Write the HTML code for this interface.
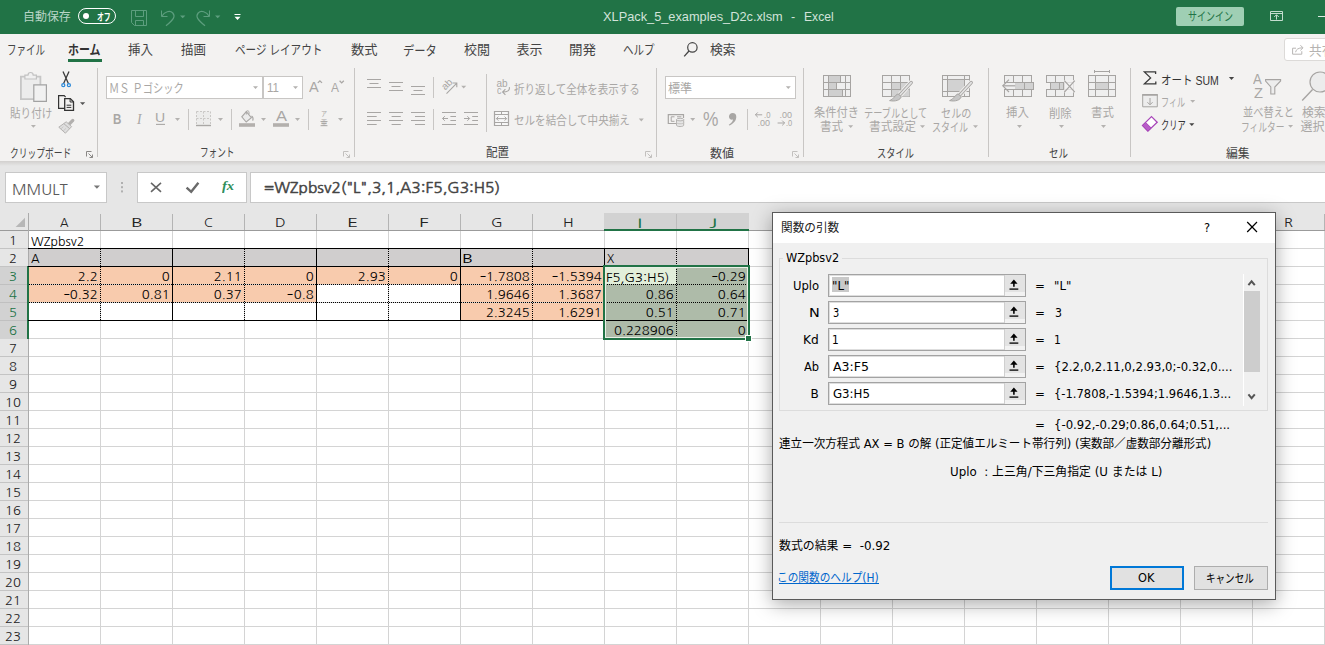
<!DOCTYPE html>
<html lang="ja">
<head>
<meta charset="utf-8">
<title>XLPack_5_examples_D2c.xlsm - Excel</title>
<style>
html,body{margin:0;padding:0;}
body{width:1325px;height:645px;overflow:hidden;position:relative;background:#fff;font-family:"Liberation Sans","Noto Sans CJK JP",sans-serif;}
.abs{position:absolute;}
.t{position:absolute;white-space:pre;line-height:0;transform-origin:0 0;margin-top:-40px;}
.t i{display:inline-block;width:0;height:40px;vertical-align:baseline;}
#titlebar{left:0;top:0;width:1325px;height:34px;background:#217346;}
#ribbon{left:0;top:34px;width:1325px;height:127px;background:#f3f2f1;}
#fbar{left:0;top:161px;width:1325px;height:52px;background:#e6e6e6;}
#fshadow{left:0;top:161px;width:1325px;height:5px;background:linear-gradient(#d2d0ce,#e6e6e6);}
.box{position:absolute;background:#fff;border:1px solid #c8c6c4;box-sizing:border-box;}
.sep{position:absolute;width:1px;background:#c8c6c4;}
#icons{position:absolute;left:0;top:0;}
</style>
</head>
<body>
<div id="titlebar" class="abs"></div>
<div id="ribbon" class="abs"></div>
<div id="fbar" class="abs"></div>
<div id="fshadow" class="abs"></div>
<style>
.c{position:absolute;width:72px;height:18px;font:12.5px/20px "NanumGothic","Liberation Sans",sans-serif;color:#000;white-space:nowrap;box-sizing:border-box;overflow:visible;}
.c.r{text-align:right;padding-right:3.2px;transform:scaleX(1.05);transform-origin:100% 50%;}
.c u{text-decoration:none;display:inline-block;transform:scaleX(1.45);transform-origin:100% 50%;margin-left:2px;}
</style>
<div class="abs" style="left:29px;top:231px;width:1296px;height:414px;background-color:#fff;background-image:linear-gradient(90deg,transparent 71px,#d4d4d4 71px),linear-gradient(0deg,#d4d4d4 1px,transparent 1px);background-size:72px 18px,72px 18px;background-position:0 0,0 0;"></div>
<div class="abs" style="left:0px;top:213px;width:1325px;height:18px;background:#e6e6e6;"></div>
<div class="abs" style="left:0px;top:231px;width:29px;height:414px;background:#e6e6e6;"></div>
<div class="abs" style="left:0px;top:230px;width:1325px;height:1px;background:#9b9b9b;"></div>
<div class="abs" style="left:28px;top:213px;width:1px;height:432px;background:#ababab;"></div>
<div class="abs" style="left:100px;top:214px;width:1px;height:16px;background:#b4b4b4;"></div>
<div class="abs" style="left:172px;top:214px;width:1px;height:16px;background:#b4b4b4;"></div>
<div class="abs" style="left:244px;top:214px;width:1px;height:16px;background:#b4b4b4;"></div>
<div class="abs" style="left:316px;top:214px;width:1px;height:16px;background:#b4b4b4;"></div>
<div class="abs" style="left:388px;top:214px;width:1px;height:16px;background:#b4b4b4;"></div>
<div class="abs" style="left:460px;top:214px;width:1px;height:16px;background:#b4b4b4;"></div>
<div class="abs" style="left:532px;top:214px;width:1px;height:16px;background:#b4b4b4;"></div>
<div class="abs" style="left:604px;top:214px;width:1px;height:16px;background:#b4b4b4;"></div>
<div class="abs" style="left:676px;top:214px;width:1px;height:16px;background:#b4b4b4;"></div>
<div class="abs" style="left:748px;top:214px;width:1px;height:16px;background:#b4b4b4;"></div>
<div class="abs" style="left:820px;top:214px;width:1px;height:16px;background:#b4b4b4;"></div>
<div class="abs" style="left:892px;top:214px;width:1px;height:16px;background:#b4b4b4;"></div>
<div class="abs" style="left:964px;top:214px;width:1px;height:16px;background:#b4b4b4;"></div>
<div class="abs" style="left:1036px;top:214px;width:1px;height:16px;background:#b4b4b4;"></div>
<div class="abs" style="left:1108px;top:214px;width:1px;height:16px;background:#b4b4b4;"></div>
<div class="abs" style="left:1180px;top:214px;width:1px;height:16px;background:#b4b4b4;"></div>
<div class="abs" style="left:1252px;top:214px;width:1px;height:16px;background:#b4b4b4;"></div>
<div class="abs" style="left:1324px;top:214px;width:1px;height:16px;background:#b4b4b4;"></div>
<div class="abs" style="left:0px;top:248px;width:28px;height:1px;background:#c4c4c4;"></div>
<div class="abs" style="left:0px;top:266px;width:28px;height:1px;background:#c4c4c4;"></div>
<div class="abs" style="left:0px;top:284px;width:28px;height:1px;background:#c4c4c4;"></div>
<div class="abs" style="left:0px;top:302px;width:28px;height:1px;background:#c4c4c4;"></div>
<div class="abs" style="left:0px;top:320px;width:28px;height:1px;background:#c4c4c4;"></div>
<div class="abs" style="left:0px;top:338px;width:28px;height:1px;background:#c4c4c4;"></div>
<div class="abs" style="left:0px;top:356px;width:28px;height:1px;background:#c4c4c4;"></div>
<div class="abs" style="left:0px;top:374px;width:28px;height:1px;background:#c4c4c4;"></div>
<div class="abs" style="left:0px;top:392px;width:28px;height:1px;background:#c4c4c4;"></div>
<div class="abs" style="left:0px;top:410px;width:28px;height:1px;background:#c4c4c4;"></div>
<div class="abs" style="left:0px;top:428px;width:28px;height:1px;background:#c4c4c4;"></div>
<div class="abs" style="left:0px;top:446px;width:28px;height:1px;background:#c4c4c4;"></div>
<div class="abs" style="left:0px;top:464px;width:28px;height:1px;background:#c4c4c4;"></div>
<div class="abs" style="left:0px;top:482px;width:28px;height:1px;background:#c4c4c4;"></div>
<div class="abs" style="left:0px;top:500px;width:28px;height:1px;background:#c4c4c4;"></div>
<div class="abs" style="left:0px;top:518px;width:28px;height:1px;background:#c4c4c4;"></div>
<div class="abs" style="left:0px;top:536px;width:28px;height:1px;background:#c4c4c4;"></div>
<div class="abs" style="left:0px;top:554px;width:28px;height:1px;background:#c4c4c4;"></div>
<div class="abs" style="left:0px;top:572px;width:28px;height:1px;background:#c4c4c4;"></div>
<div class="abs" style="left:0px;top:590px;width:28px;height:1px;background:#c4c4c4;"></div>
<div class="abs" style="left:0px;top:608px;width:28px;height:1px;background:#c4c4c4;"></div>
<div class="abs" style="left:0px;top:626px;width:28px;height:1px;background:#c4c4c4;"></div>
<div class="abs" style="left:0px;top:644px;width:28px;height:1px;background:#c4c4c4;"></div>
<svg class="abs" style="left:0;top:213px" width="29" height="18"><path d="M25 4.8 L25 14 L15.6 14 Z" fill="#b7b7b7"/></svg>
<div class="abs" style="left:604px;top:213px;width:145px;height:17px;background:#d2d2d2;"></div>
<div class="abs" style="left:676px;top:214px;width:1px;height:15px;background:#bcbcbc;"></div>
<div class="abs" style="left:604px;top:229px;width:145px;height:2px;background:#217346;"></div>
<div class="abs" style="left:0px;top:267px;width:28px;height:72px;background:#d2d2d2;"></div>
<div class="abs" style="left:0px;top:284px;width:28px;height:1px;background:#c0c0c0;"></div>
<div class="abs" style="left:0px;top:302px;width:28px;height:1px;background:#c0c0c0;"></div>
<div class="abs" style="left:0px;top:320px;width:28px;height:1px;background:#c0c0c0;"></div>
<div class="abs" style="left:27px;top:266px;width:2px;height:73px;background:#217346;"></div>
<div class="abs" style="left:29px;top:249px;width:720px;height:17px;background:#d0cece;"></div>
<div class="abs" style="left:29px;top:267px;width:576px;height:17px;background:#f8cbad;"></div>
<div class="abs" style="left:29px;top:285px;width:288px;height:17px;background:#f8cbad;"></div>
<div class="abs" style="left:461px;top:285px;width:144px;height:17px;background:#f8cbad;"></div>
<div class="abs" style="left:461px;top:303px;width:144px;height:17px;background:#f8cbad;"></div>
<div class="abs" style="left:605px;top:267px;width:143px;height:71px;background:#aebba9;"></div>
<div class="abs" style="left:605px;top:267px;width:71px;height:17px;background:#e2efda;"></div>
<div class="abs" style="left:28px;top:248px;width:721px;height:1px;background:#000;"></div>
<div class="abs" style="left:28px;top:266px;width:721px;height:1px;background:#000;"></div>
<div class="abs" style="left:28px;top:320px;width:721px;height:1px;background:#000;"></div>
<div class="abs" style="left:172px;top:248px;width:1px;height:73px;background:#000;"></div>
<div class="abs" style="left:316px;top:248px;width:1px;height:73px;background:#000;"></div>
<div class="abs" style="left:460px;top:248px;width:1px;height:73px;background:#000;"></div>
<div class="abs" style="left:604px;top:248px;width:1px;height:73px;background:#000;"></div>
<div class="abs" style="left:748px;top:248px;width:1px;height:73px;background:#000;"></div>
<div class="abs" style="left:29px;top:284px;width:719px;height:1px;background:transparent;background-image:repeating-linear-gradient(90deg,#000 0,#000 1px,transparent 1px,transparent 2px);"></div>
<div class="abs" style="left:29px;top:302px;width:719px;height:1px;background:transparent;background-image:repeating-linear-gradient(90deg,#000 0,#000 1px,transparent 1px,transparent 2px);"></div>
<div class="abs" style="left:100px;top:249px;width:1px;height:71px;background:transparent;background-image:repeating-linear-gradient(180deg,#000 0,#000 1px,transparent 1px,transparent 2px);"></div>
<div class="abs" style="left:244px;top:249px;width:1px;height:71px;background:transparent;background-image:repeating-linear-gradient(180deg,#000 0,#000 1px,transparent 1px,transparent 2px);"></div>
<div class="abs" style="left:388px;top:249px;width:1px;height:71px;background:transparent;background-image:repeating-linear-gradient(180deg,#000 0,#000 1px,transparent 1px,transparent 2px);"></div>
<div class="abs" style="left:532px;top:249px;width:1px;height:71px;background:transparent;background-image:repeating-linear-gradient(180deg,#000 0,#000 1px,transparent 1px,transparent 2px);"></div>
<div class="abs" style="left:676px;top:249px;width:1px;height:71px;background:transparent;background-image:repeating-linear-gradient(180deg,#000 0,#000 1px,transparent 1px,transparent 2px);"></div>
<div class="abs" style="left:676px;top:321px;width:1px;height:16px;background:transparent;background-image:repeating-linear-gradient(180deg,#000 0,#000 1px,transparent 1px,transparent 2px);"></div>
<div class="abs" style="left:603px;top:265px;width:147px;height:75px;border:2px solid #217346;box-sizing:border-box;"></div>
<div class="abs" style="left:605px;top:267px;width:143px;height:71px;border:1px solid #e9efe6;box-sizing:border-box;"></div>
<div class="abs" style="left:745px;top:335px;width:7px;height:7px;background:#fff;"></div>
<div class="abs" style="left:746px;top:336px;width:5px;height:5px;background:#217346;"></div>
<div class="c r" style="left:29px;top:267px;">2.2</div>
<div class="c r" style="left:101px;top:267px;">0</div>
<div class="c r" style="left:173px;top:267px;">2.11</div>
<div class="c r" style="left:245px;top:267px;">0</div>
<div class="c r" style="left:317px;top:267px;">2.93</div>
<div class="c r" style="left:389px;top:267px;">0</div>
<div class="c r" style="left:461px;top:267px;"><u>-</u>1.7808</div>
<div class="c r" style="left:533px;top:267px;"><u>-</u>1.5394</div>
<div class="c r" style="left:677px;top:267px;"><u>-</u>0.29</div>
<div class="c r" style="left:29px;top:285px;"><u>-</u>0.32</div>
<div class="c r" style="left:101px;top:285px;">0.81</div>
<div class="c r" style="left:173px;top:285px;">0.37</div>
<div class="c r" style="left:245px;top:285px;"><u>-</u>0.8</div>
<div class="c r" style="left:461px;top:285px;">1.9646</div>
<div class="c r" style="left:533px;top:285px;">1.3687</div>
<div class="c r" style="left:605px;top:285px;">0.86</div>
<div class="c r" style="left:677px;top:285px;">0.64</div>
<div class="c r" style="left:461px;top:303px;">2.3245</div>
<div class="c r" style="left:533px;top:303px;">1.6291</div>
<div class="c r" style="left:605px;top:303px;">0.51</div>
<div class="c r" style="left:677px;top:303px;">0.71</div>
<div class="c r" style="left:605px;top:321px;">0.228906</div>
<div class="c r" style="left:677px;top:321px;">0</div>
<!-- ribbon boxes / separators -->
<div class="box" style="left:106px;top:76px;width:157px;height:23px;"></div>
<div class="box" style="left:263px;top:76px;width:40px;height:23px;"></div>
<div class="box" style="left:665px;top:76px;width:131px;height:23px;"></div>
<div class="sep" style="left:97px;top:68px;height:89px;"></div>
<div class="sep" style="left:354px;top:68px;height:89px;"></div>
<div class="sep" style="left:656px;top:68px;height:89px;"></div>
<div class="sep" style="left:803px;top:68px;height:89px;"></div>
<div class="sep" style="left:988px;top:68px;height:89px;"></div>
<div class="sep" style="left:1130px;top:68px;height:89px;"></div>
<div class="sep" style="left:188px;top:109px;height:21px;"></div>
<div class="sep" style="left:231px;top:109px;height:21px;"></div>
<div class="sep" style="left:308px;top:109px;height:21px;"></div>
<div class="sep" style="left:433px;top:77px;height:21px;"></div>
<div class="sep" style="left:433px;top:109px;height:21px;"></div>
<div class="sep" style="left:486px;top:74px;height:58px;"></div>
<div class="sep" style="left:747px;top:109px;height:21px;"></div>
<!-- home tab underline -->
<div class="abs" style="left:68px;top:59px;width:34px;height:3px;background:#217346;"></div>
<!-- sign-in button -->
<div class="abs" style="left:1176px;top:7px;width:68px;height:19px;background:#9fcfb4;border-radius:2px;"></div>
<!-- share button -->
<div class="abs" style="left:1284px;top:38px;width:60px;height:23px;background:#fff;border:1px solid #dcdad8;border-radius:3px;box-sizing:border-box;"></div>
<!-- autosave toggle -->
<div class="abs" style="left:78px;top:8px;width:38px;height:16px;border:1px solid #fff;border-radius:8px;box-sizing:border-box;"></div>
<div class="abs" style="left:82.7px;top:12.7px;width:6.6px;height:6.6px;background:#fff;border-radius:4px;"></div>
<!-- formula bar boxes -->
<div class="box" style="left:5px;top:172px;width:102px;height:31px;border-color:#c8c8c8;"></div>
<div class="box" style="left:137px;top:172px;width:110px;height:31px;border-color:#c8c8c8;"></div>
<div class="box" style="left:250px;top:172px;width:1080px;height:31px;border-color:#c8c8c8;"></div>

<style>
#dlg{position:absolute;left:772px;top:212px;width:504px;height:388px;box-sizing:border-box;border:1px solid #5a5a5a;background:#f0f0f0;box-shadow:0 4px 18px 0 rgba(0,0,0,.34);}
#dlgtitle{position:absolute;left:0;top:0;width:502px;height:30px;background:#fff;}
.grp{position:absolute;border:1px solid #dcdcdc;box-sizing:border-box;}
.inp{position:absolute;left:828px;width:198px;height:23px;box-sizing:border-box;border:1px solid #a3a3a3;background:#fff;box-shadow:inset 0 0 0 1px #dedede;}
.rbtn{position:absolute;left:1004px;width:21px;height:21px;background:linear-gradient(#e3e3e3 0,#e3e3e3 80%,#f2f2f2 80%);border-left:1px solid #cfcfcf;box-sizing:border-box;}
.dbtn{position:absolute;top:566px;height:24px;box-sizing:border-box;background:#e1e1e1;}
</style>
<div id="dlg"><div id="dlgtitle"></div></div>
<div class="grp" style="left:779px;top:258px;width:489px;height:153px;"></div>
<div class="abs" style="left:783px;top:252px;width:59px;height:12px;background:#f0f0f0;"></div>
<div class="inp" style="top:274px"></div>
<div class="rbtn" style="top:275px"></div>
<div class="inp" style="top:301px"></div>
<div class="rbtn" style="top:302px"></div>
<div class="inp" style="top:328px"></div>
<div class="rbtn" style="top:329px"></div>
<div class="inp" style="top:355px"></div>
<div class="rbtn" style="top:356px"></div>
<div class="inp" style="top:382px"></div>
<div class="rbtn" style="top:383px"></div>
<div class="abs" style="left:832px;top:277px;width:17px;height:15px;background:#c9c9c9;"></div>
<div class="abs" style="left:1243px;top:274px;width:1px;height:132px;background:#fff;"></div>
<div class="abs" style="left:1244px;top:274px;width:16px;height:132px;background:#f0f0f0;"></div>
<div class="abs" style="left:1244px;top:291px;width:16px;height:81px;background:#cdcdcd;"></div>
<div class="abs" style="left:779px;top:522px;width:489px;height:1px;background:#dcdcdc;"></div>
<div class="dbtn" style="left:1110px;width:74px;border:2px solid #0078d7;"></div>
<div class="dbtn" style="left:1194px;width:74px;border:1px solid #adadad;"></div>
<div class="abs" style="left:779px;top:583px;width:100px;height:1px;background:#0066cc;"></div>
<svg id="icons" width="1325" height="645" viewBox="0 0 1325 645">
<g id="title-icons" fill="none" stroke="#5d9e7e" stroke-width="1">
  <!-- save -->
  <path d="M131.5 10.5 H146.5 V25.5 H134.5 L131.5 22.5 Z"/>
  <path d="M135.5 10.5 V16.5 H143.5 V10.5"/>
  <path d="M135.5 25.5 V20.5 H143.5 V25.5"/>
  <!-- undo -->
  <path d="M161.5 10.5 V16.5 H167.5" />
  <path d="M161.8 16.2 C164.5 11.5 170 10 172.8 13 C175.8 16.5 173.5 19.5 166 25.8" stroke-width="1.2"/>
  <path d="M180 15.5 h5.4 l-2.7 2.8 z" fill="#5d9e7e" stroke="none"/>
  <!-- redo -->
  <path d="M209.5 10.5 V16.5 H203.5" />
  <path d="M209.2 16.2 C206.5 11.5 201 10 198.2 13 C195.2 16.5 197.5 19.5 205 25.8" stroke-width="1.2"/>
  <path d="M215 15.5 h5.4 l-2.7 2.8 z" fill="#5d9e7e" stroke="none"/>
  <!-- customize QAT -->
  <path d="M234.5 14 h6 v1 h-6 z M234.5 16.8 h6 l-3 3.3 z" fill="#fff" stroke="none"/>
  <!-- ribbon display options -->
  <path d="M1270.5 11.5 H1282.5 V20.5 H1270.5 Z M1270.5 13.5 H1282.5" stroke="#c4ddcf"/>
  <path d="M1276.5 19.6 V15 M1274.2 17 L1276.5 14.7 L1278.8 17" stroke="#c4ddcf"/>
  <!-- minimise -->
  <path d="M1318 16.5 H1326" stroke="#dcebe2"/>
</g>

<g id="clip-icons" fill="none" stroke-width="1">
  <!-- paste -->
  <path d="M20.9 76.7 H40.4 V99.1 H20.9 Z" fill="#ececec" stroke="#c6c6c6" stroke-width="1.8"/>
  <path d="M24.9 79 V75.2 H28 C28 71.6 33.2 71.6 33.2 75.2 H36.4 V79 Z" fill="#f0f0f0" stroke="#c2c2c2" stroke-width="1.2"/>
  <path d="M33.8 84.8 H46.4 V101.3 H33.8 Z" fill="#f1f1f1" stroke="#a2a2a2" stroke-width="1.2"/>
  <path d="M30.9 125 h5 l-2.5 2.8 z" fill="#b4b2b0" stroke="none"/>
  <!-- scissors -->
  <path d="M63 71.4 L68.4 83.4 M69 71.4 L63.6 83.4" stroke="#3b3b3b" stroke-width="1.3"/>
  <circle cx="63.3" cy="85.2" r="1.5" stroke="#2b88d8" stroke-width="1.3"/>
  <circle cx="68.9" cy="85.2" r="1.5" stroke="#2b88d8" stroke-width="1.3"/>
  <!-- copy -->
  <path d="M64.6 108.4 H58.6 V95.7 H64.2 L65.6 97.1" stroke="#333" stroke-width="1.2"/>
  <path d="M64.7 98.6 H70.3 L73.5 101.8 V110.4 H64.7 Z" stroke="#333" stroke-width="1.3" fill="#f3f2f1"/>
  <path d="M70.1 98.8 V102 H73.3" stroke="#333" stroke-width="1"/>
  <path d="M66.6 105.2 H71.3 M66.6 107.4 H71.3" stroke="#333" stroke-width="1"/>
  <path d="M80 102.2 h5.2 l-2.6 2.9 z" fill="#555" stroke="none"/>
  <!-- format painter -->
  <path d="M69.4 123.8 L72.8 120.4" stroke="#b2b0ae" stroke-width="3.2" stroke-linecap="round"/>
  <path d="M58.8 127.2 L65.4 133.2 L71.6 126.6 L66.2 121.8 Z" fill="#dedede" stroke="#b4b2b0" stroke-width="1"/>
  <path d="M64 123.8 L69.8 128.8" stroke="#b4b2b0" stroke-width="1"/>
  <path d="M61 128.8 L63.4 126.6 M63.2 131 L66 128.4" stroke="#c4c2c0" stroke-width="0.8"/>
  <!-- launcher clipboard -->
  <path d="M86.5 156.5 V151.5 H91.5 M88.5 153.5 L92.5 157.5 M92.5 154.5 V157.5 H89.5" stroke="#8a8886" stroke-width="1"/>
</g>

<g id="font-icons" fill="none" stroke-width="1">
  <!-- dropdown arrows in combo boxes -->
  <path d="M253 86.3 h5 l-2.5 2.8 z M293 86.3 h5 l-2.5 2.8 z" fill="#b4b2b0"/>
  <!-- grow/shrink carets -->
  <path d="M317.8 82.9 L319.9 80.8 L322 82.9" stroke="#a9a7a5" stroke-width="1.3"/>
  <path d="M339.6 80.8 L341.7 82.9 L343.8 80.8" stroke="#a9a7a5" stroke-width="1.3"/>
  <!-- U underline -->
  <path d="M156 124.4 H165" stroke="#a9a7a5" stroke-width="1.1"/>
  <path d="M175 118.1 h5 l-2.5 2.8 z" fill="#b4b2b0"/>
  <!-- borders -->
  <rect x="196.5" y="111.5" width="14" height="13" fill="#ececeb" stroke="none"/>
  <path d="M196.5 111.5 H210.5 M196.5 111.5 V124.5 M210.5 111.5 V124.5 M203.5 111.5 V124.5 M196.5 118.5 H210.5" stroke="#c9c7c5" stroke-dasharray="2 1.5"/>
  <path d="M196 125.5 H211" stroke="#a9a7a5" stroke-width="1.4"/>
  <path d="M218 118.1 h5 l-2.5 2.8 z" fill="#b4b2b0"/>
  <!-- fill color -->
  <path d="M246.3 111.6 L251.4 117.6 L246.2 122 L241.8 116.8 Z" fill="#ebebeb" stroke="#a9a7a5" stroke-width="1.1"/>
  <path d="M246.3 114.5 V111.8 C246.3 110.4 249 110.4 249 112.2 V114.2" stroke="#a9a7a5"/>
  <path d="M251.5 116 C253.2 117 253.4 119.4 252.6 120.6" stroke="#a9a7a5" stroke-width="1.2"/>
  <rect x="239" y="123.2" width="16" height="3.6" fill="#b3b0ad"/>
  <path d="M261 118.1 h5 l-2.5 2.8 z" fill="#b4b2b0"/>
  <!-- font color bar -->
  <rect x="273" y="123.2" width="16" height="3.6" fill="#b3b0ad"/>
  <path d="M295 118.1 h5 l-2.5 2.8 z" fill="#b4b2b0"/>
  <!-- phonetic -->
  <path d="M320.5 121.5 H327.5 M321.5 123.5 H326.5 M320.5 125.7 H327.5" stroke="#b0aeac"/>
  <path d="M338 118.1 h5 l-2.5 2.8 z" fill="#b4b2b0"/>
  <!-- launcher font -->
  <path d="M343.5 156.5 V151.5 H348.5 M345.5 153.5 L349.5 157.5 M349.5 154.5 V157.5 H346.5" stroke="#c2c0be" stroke-width="1"/>
</g>

<g id="align-icons" fill="none" stroke="#a8a6a4" stroke-width="1">
  <!-- vertical aligns (top row) -->
  <path d="M367 79.5 H381 M369.5 83.5 H378.5 M367 87.5 H381"/>
  <path d="M389 82.5 H403 M391.5 86.5 H400.5 M389 90.5 H403"/>
  <path d="M411 86.5 H425 M413.5 90.5 H422.5 M411 94.5 H425"/>
  <!-- orientation -->
  <text transform="translate(445.2,90.6) rotate(-45)" font-family="Liberation Sans, sans-serif" font-size="10" fill="#a8a6a4" stroke="none">ab</text>
  <path d="M446.5 93.6 L456.6 83.3 M452.6 83 H456.8 V87.2" stroke-width="1.1"/>
  <path d="M461.2 85.8 h5 l-2.5 2.8 z" fill="#b4b2b0" stroke="none"/>
  <!-- wrap arrow -->
  <path d="M509.3 87.2 C510 90.6 507.4 92 502.8 92 M505.4 89.2 L502.6 92 L505.4 94.8" stroke-width="1.1"/>
  <!-- horizontal aligns (bottom row) -->
  <path d="M367 112.5 H381 M367 116.5 H376.7 M367 120.5 H381 M367 124.5 H376.7"/>
  <path d="M389 112.5 H403 M391.6 116.5 H400.8 M389 120.5 H403 M391.6 124.5 H400.8"/>
  <path d="M411 112.5 H425 M415 116.5 H425 M411 120.5 H425 M415 124.5 H425"/>
  <!-- outdent -->
  <path d="M442 112.5 H456 M450.4 116.5 H456 M450.4 120.5 H456 M442 124.5 H456"/>
  <path d="M442.6 118.5 H448 M444.8 116.2 L442.5 118.5 L444.8 120.8"/>
  <!-- indent -->
  <path d="M464 112.5 H478 M472.2 116.5 H478 M472.2 120.5 H478 M464 124.5 H478"/>
  <path d="M464 118.5 H469.5 M467.3 116.2 L469.6 118.5 L467.3 120.8"/>
  <!-- merge & center -->
  <path d="M494.5 111.5 H508.5 V125.5 H494.5 Z" stroke-width="1.2" fill="#f7f7f7"/><path d="M494.5 114.5 H508.5 M494.5 122.5 H508.5 M501.5 111.5 V114.5 M501.5 122.5 V125.5"/>
  <path d="M496.4 118.6 H506.6 M498.4 116.6 L496.4 118.6 L498.4 120.6 M504.6 116.6 L506.6 118.6 L504.6 120.6"/>
  <path d="M638.8 118.6 h5 l-2.5 2.8 z" fill="#b4b2b0" stroke="none"/>
  <!-- launcher -->
  <path d="M645.5 156.5 V151.5 H650.5 M647.5 153.5 L651.5 157.5 M651.5 154.5 V157.5 H648.5" stroke="#c2c0be"/>
</g>

<g id="num-icons" fill="none" stroke="#a8a6a4" stroke-width="1">
  <path d="M785.8 86.2 h5 l-2.5 2.8 z" fill="#b4b2b0" stroke="none"/>
  <!-- accounting -->
  <path d="M676 123.5 H668.3 V114.6 H683.5 V118" stroke-width="1.2"/>
  <path d="M674.5 116.8 H671.2 V121.3 H674.5 M677 116.8 H681.4" stroke-width="1"/>
  <path d="M676.5 119.6 V125.2 C676.5 127 683.7 127 683.7 125.2 V119.6" fill="#e6e6e6" stroke="#b4b2b0"/>
  <ellipse cx="680.1" cy="119.6" rx="3.6" ry="1.3" fill="#ececec" stroke="#b4b2b0"/>
  <path d="M676.5 122.5 C676.5 124.2 683.7 124.2 683.7 122.5" stroke="#c4c2c0"/>
  <path d="M690.2 118.1 h5 l-2.5 2.8 z" fill="#b4b2b0" stroke="none"/>
  <!-- comma -->
  <path d="M732.6 113 C735 113 736.4 114.6 736.3 117 C736.2 120.6 733.4 124 729.2 125.6 L728.8 124.8 C731.4 123.4 732.8 121.6 733 119.6 C730.6 120.2 728.9 118.6 729 116.6 C729.1 114.4 730.6 113 732.6 113 Z" fill="#a8a6a4" stroke="none"/>
  <!-- inc decimal arrow -->
  <path d="M755.4 114.8 H762.2 M757.8 112.4 L755.4 114.8 L757.8 117.2"/>
  <!-- dec decimal arrow -->
  <path d="M777.6 123 H784.6 M782.2 120.6 L784.6 123 L782.2 125.4"/>
  <!-- launcher -->
  <path d="M792.5 156.5 V151.5 H797.5 M794.5 153.5 L798.5 157.5 M798.5 154.5 V157.5 H795.5" stroke="#c2c0be"/>
</g>

<g id="style-icons" fill="none" stroke="#a6a4a2" stroke-width="1">
  <!-- conditional formatting -->
  <rect x="823.5" y="75.5" width="27" height="21" fill="#efefef"/>
  <rect x="829" y="76" width="11.5" height="6" fill="#cfcfcf" stroke="none"/>
  <rect x="829" y="83" width="7" height="6" fill="#cfcfcf" stroke="none"/>
  <rect x="829" y="90" width="13.5" height="6" fill="#cfcfcf" stroke="none"/>
  <path d="M823.5 82.5 H850.5 M823.5 89.5 H850.5 M828.5 75.5 V96.5 M845.5 75.5 V96.5 M840.5 75.5 V82.5 M836.5 82.5 V89.5 M842.5 89.5 V96.5"/>
  <path d="M848.2 125.2 h5 l-2.5 2.8 z" fill="#b4b2b0" stroke="none"/>
  <!-- format as table -->
  <rect x="882.5" y="75.5" width="27" height="21" fill="#efefef"/>
  <rect x="892" y="83" width="17.5" height="13.5" fill="#d2d2d2" stroke="none"/>
  <path d="M882.5 82.5 H909.5 M882.5 89.5 H909.5 M891.5 75.5 V96.5 M900.5 75.5 V96.5"/>
  <g transform="translate(0,0)"><path d="M911.2 82.6 L899.6 95.2" stroke="#f3f2f1" stroke-width="5.2" stroke-linecap="round"/><path d="M911.2 82.6 L899.6 95.2" stroke="#a6a4a2" stroke-width="3.4" stroke-linecap="round"/><path d="M911.2 82.6 L899.6 95.2" stroke="#e4e4e4" stroke-width="1.6" stroke-linecap="round"/><path d="M898 93.8 L901.2 96.6 C900.6 100 895.4 101.8 889.6 100.6 C893.6 99.6 894.4 95.4 898 93.8 Z" fill="#c6c6c6" stroke="#a6a4a2" stroke-width="1"/></g>
  <path d="M920 125.2 h5 l-2.5 2.8 z" fill="#b4b2b0" stroke="none"/>
  <!-- cell styles -->
  <rect x="942.5" y="75.5" width="27" height="21" fill="#efefef"/>
  <rect x="948" y="79.5" width="16" height="12" fill="#d2d2d2" stroke="none"/>
  <path d="M942.5 79.5 H969.5 M942.5 91.5 H969.5 M947.5 75.5 V96.5 M964.5 75.5 V96.5"/>
  <g transform="translate(60,0)"><path d="M911.2 82.6 L899.6 95.2" stroke="#f3f2f1" stroke-width="5.2" stroke-linecap="round"/><path d="M911.2 82.6 L899.6 95.2" stroke="#a6a4a2" stroke-width="3.4" stroke-linecap="round"/><path d="M911.2 82.6 L899.6 95.2" stroke="#e4e4e4" stroke-width="1.6" stroke-linecap="round"/><path d="M898 93.8 L901.2 96.6 C900.6 100 895.4 101.8 889.6 100.6 C893.6 99.6 894.4 95.4 898 93.8 Z" fill="#c6c6c6" stroke="#a6a4a2" stroke-width="1"/></g>
  <path d="M973 125.2 h5 l-2.5 2.8 z" fill="#b4b2b0" stroke="none"/>
</g>

<g id="cells-icons" fill="none" stroke="#a6a4a2" stroke-width="1">
  <!-- insert -->
  <rect x="1004.5" y="75.5" width="27" height="21" fill="#efefef"/>
  <path d="M1013.5 75.5 V96.5 M1022.5 75.5 V96.5 M1004.5 82.5 H1031.5 M1004.5 89.5 H1031.5"/>
  <rect x="1012" y="82.5" width="21.5" height="7" fill="#d2d2d2" stroke="#a6a4a2"/>
  <path d="M1024.5 82.5 V89.5"/>
  <rect x="1004" y="83" width="11" height="6" fill="#efefef" stroke="none"/>
  <path d="M1015.2 85.8 H1003" stroke-width="1.2"/>
  <path d="M1009 79.6 L1002.8 85.8 L1009 92" stroke-width="1.2"/>
  <path d="M1017 125.1 h5 l-2.5 2.8 z" fill="#b4b2b0" stroke="none"/>
  <!-- delete -->
  <rect x="1046.5" y="75.5" width="27" height="21" fill="#efefef"/>
  <path d="M1055.5 75.5 V96.5 M1064.5 75.5 V96.5 M1046.5 82.5 H1073.5 M1046.5 89.5 H1073.5"/>
  <rect x="1045.5" y="83" width="5" height="6" fill="#f3f2f1" stroke="none"/>
  <rect x="1050.5" y="82.5" width="13" height="7" fill="#d2d2d2" stroke="#a6a4a2"/>
  <path d="M1059.5 82.5 V89.5"/>
  <rect x="1064" y="80" width="11" height="12.5" fill="#f3f2f1" stroke="none" opacity="0.75"/>
  <path d="M1064.4 80.6 L1074.8 92.2 M1074.8 80.6 L1064.4 92.2" stroke-width="1.2"/>
  <path d="M1059 125.1 h5 l-2.5 2.8 z" fill="#b4b2b0" stroke="none"/>
  <!-- format -->
  <rect x="1088.5" y="75.5" width="27" height="21" fill="#efefef"/>
  <rect x="1096" y="83" width="12" height="6" fill="#d2d2d2" stroke="none"/>
  <path d="M1095.5 75.5 V96.5 M1108.5 75.5 V96.5 M1088.5 82.5 H1115.5 M1088.5 89.5 H1115.5"/>
  <path d="M1094.5 71.5 H1109.5 M1094.5 70 V73 M1109.5 70 V73"/>
  <path d="M1101 125.1 h5 l-2.5 2.8 z" fill="#b4b2b0" stroke="none"/>
</g>

<g id="edit-icons" fill="none" stroke="#a6a4a2" stroke-width="1">
  <!-- sigma -->
  <path d="M1155.6 74 V71.9 H1144.4 L1150.6 77.9 L1144.4 83.9 H1155.8 V81.6" stroke="#3a3a3a" stroke-width="1.3"/>
  <path d="M1228.9 77 h5.2 l-2.6 2.9 z" fill="#444" stroke="none"/>
  <!-- fill -->
  <path d="M1142.7 94.9 H1157.3 V106.8 H1142.7 Z" fill="#ededed"/>
  <path d="M1142.2 94.8 H1157.8" stroke-width="1.6"/>
  <path d="M1150 98 V104.6 M1147.4 102.2 L1150 104.8 L1152.6 102.2"/>
  <path d="M1190.2 99.9 h5 l-2.5 2.8 z" fill="#b4b2b0" stroke="none"/>
  <!-- clear (eraser) -->
  <path d="M1151.5 116.6 L1157.2 122.2 L1147.9 131.1 L1142.5 125.4 Z" fill="#fff" stroke="#a846b9" stroke-width="1.3"/>
  <path d="M1145.6 122.4 L1151.2 128 L1147.9 131.1 L1142.5 125.4 Z" fill="#b85cc8" stroke="#a846b9" stroke-width="1"/>
  <path d="M1189.2 123.2 h5.2 l-2.6 2.9 z" fill="#444" stroke="none"/>
  <!-- funnel -->
  <path d="M1265.6 79.6 H1280.6 V81 L1274.8 87 V94 H1270.8 V87 L1265.6 81 Z" fill="#ededed" stroke-width="1.1"/>
  <path d="M1288.1 125 h5 l-2.5 2.8 z" fill="#b4b2b0" stroke="none"/>
  <!-- magnifier -->
  <circle cx="1320" cy="82" r="10" fill="#ececec" stroke-width="1.2"/>
  <path d="M1312.6 89.6 L1302.2 100.4" stroke-width="1.4"/>
</g>

<g id="misc-icons" fill="none" stroke-width="1">
  <!-- search icon (tab row) -->
  <circle cx="692.4" cy="47.4" r="4.7" stroke="#444" stroke-width="1.2"/>
  <path d="M689 51 L684.2 56.4" stroke="#444" stroke-width="1.3"/>
  <!-- share icon -->
  <path d="M1296 48.2 H1292.6 V54.2 H1301.8 V51.2" stroke="#b8b6b4"/>
  <path d="M1295.6 52.2 C1296 49.4 1298.4 47.8 1302.6 47.8 M1300.4 45.2 L1303 47.8 L1300.4 50.4" stroke="#b8b6b4"/>
  <!-- name box arrow -->
  <path d="M93.8 185.4 h6.2 l-3.1 3.4 z" fill="#777" stroke="none"/>
  <!-- formula bar dots -->
  <rect x="121" y="182" width="2" height="2" fill="#b0b0b0"/>
  <rect x="121" y="186.2" width="2" height="2" fill="#b0b0b0"/>
  <rect x="121" y="190.4" width="2" height="2" fill="#b0b0b0"/>
  <!-- cancel / enter -->
  <path d="M151 182.8 L161 191.8 M161 182.8 L151 191.8" stroke="#666" stroke-width="1.6"/>
  <path d="M186.6 187.6 L191.2 191.8 L198.4 182.8" stroke="#6a6a6a" stroke-width="2.4"/>
  <!-- dialog close X -->
  <path d="M1247.2 222 L1257 232 M1257 222 L1247.2 232" stroke="#000" stroke-width="1.2"/>
  <!-- dialog scrollbar chevrons -->
  <path d="M1248.4 285.2 L1251.6 281.4 L1254.8 285.2" stroke="#555" stroke-width="2"/>
  <path d="M1248.4 394.4 L1251.6 398.2 L1254.8 394.4" stroke="#555" stroke-width="2"/>
</g>

<g id="dlg-icons" fill="none" stroke="#000" stroke-width="1">
<path d="M1009.5 289.1 H1018.3" stroke-width="1.3"/>
<path d="M1013.9 286.8 V281.0" stroke-width="1.6"/>
<path d="M1010.2 283.8 L1013.9 279.6 L1017.6 283.8 Z" fill="#000" stroke="none"/>
<path d="M1009.5 316.1 H1018.3" stroke-width="1.3"/>
<path d="M1013.9 313.8 V308.0" stroke-width="1.6"/>
<path d="M1010.2 310.8 L1013.9 306.6 L1017.6 310.8 Z" fill="#000" stroke="none"/>
<path d="M1009.5 343.1 H1018.3" stroke-width="1.3"/>
<path d="M1013.9 340.8 V335.0" stroke-width="1.6"/>
<path d="M1010.2 337.8 L1013.9 333.6 L1017.6 337.8 Z" fill="#000" stroke="none"/>
<path d="M1009.5 370.1 H1018.3" stroke-width="1.3"/>
<path d="M1013.9 367.8 V362.0" stroke-width="1.6"/>
<path d="M1010.2 364.8 L1013.9 360.6 L1017.6 364.8 Z" fill="#000" stroke="none"/>
<path d="M1009.5 397.1 H1018.3" stroke-width="1.3"/>
<path d="M1013.9 394.8 V389.0" stroke-width="1.6"/>
<path d="M1010.2 391.8 L1013.9 387.6 L1017.6 391.8 Z" fill="#000" stroke="none"/>
</g>
</svg>
<span class="t" style='left:22.70px;top:21.40px;font:normal 12px "Liberation Sans", "Noto Sans CJK JP", sans-serif;color:#b9d5c6;transform:scaleX(0.9957);'><i></i>自動保存</span>
<span class="t" style='left:96.80px;top:20.60px;font:bold 10.5px "Liberation Sans", "Noto Sans CJK JP", sans-serif;color:#ffffff;transform:scaleX(0.6537);'><i></i>オフ</span>
<span class="t" style='left:602.80px;top:21.10px;font:normal 13.2px "Liberation Sans", "Noto Sans CJK JP", sans-serif;color:#d3e3da;transform:scaleX(0.9690);'><i></i>XLPack_5_examples_D2c.xlsm</span>
<span class="t" style='left:791.40px;top:21.10px;font:normal 13.2px "Liberation Sans", "Noto Sans CJK JP", sans-serif;color:#d3e3da;transform:scaleX(0.9500);'><i></i>-</span>
<span class="t" style='left:803.58px;top:21.10px;font:normal 13.2px "Liberation Sans", "Noto Sans CJK JP", sans-serif;color:#d3e3da;transform:scaleX(0.9196);'><i></i>Excel</span>
<span class="t" style='left:1187.50px;top:20.90px;font:normal 12px "Liberation Sans", "Noto Sans CJK JP", sans-serif;color:#217346;transform:scaleX(0.7500);'><i></i>サインイン</span>
<span class="t" style='left:6.77px;top:53.80px;font:normal 13px "Liberation Sans", "Noto Sans CJK JP", sans-serif;color:#444444;transform:scaleX(0.7314);'><i></i>ファイル</span>
<span class="t" style='left:68.00px;top:54.30px;font:bold 13px "Liberation Sans", "Noto Sans CJK JP", sans-serif;color:#333333;transform:scaleX(0.8436);'><i></i>ホーム</span>
<span class="t" style='left:128.30px;top:54.30px;font:normal 13px "Liberation Sans", "Noto Sans CJK JP", sans-serif;color:#444444;transform:scaleX(0.9577);'><i></i>挿入</span>
<span class="t" style='left:181.30px;top:54.30px;font:normal 13px "Liberation Sans", "Noto Sans CJK JP", sans-serif;color:#444444;transform:scaleX(0.9577);'><i></i>描画</span>
<span class="t" style='left:235.40px;top:54.30px;font:normal 13px "Liberation Sans", "Noto Sans CJK JP", sans-serif;color:#444444;transform:scaleX(0.8134);'><i></i>ページ レイアウト</span>
<span class="t" style='left:351.00px;top:54.30px;font:normal 13px "Liberation Sans", "Noto Sans CJK JP", sans-serif;color:#444444;transform:scaleX(1.0192);'><i></i>数式</span>
<span class="t" style='left:403.14px;top:54.80px;font:normal 13px "Liberation Sans", "Noto Sans CJK JP", sans-serif;color:#444444;transform:scaleX(0.8649);'><i></i>データ</span>
<span class="t" style='left:464.00px;top:54.30px;font:normal 13px "Liberation Sans", "Noto Sans CJK JP", sans-serif;color:#444444;'><i></i>校閲</span>
<span class="t" style='left:516.50px;top:54.30px;font:normal 13px "Liberation Sans", "Noto Sans CJK JP", sans-serif;color:#444444;'><i></i>表示</span>
<span class="t" style='left:568.96px;top:53.80px;font:normal 13px "Liberation Sans", "Noto Sans CJK JP", sans-serif;color:#444444;transform:scaleX(1.0400);'><i></i>開発</span>
<span class="t" style='left:622.50px;top:54.30px;font:normal 13px "Liberation Sans", "Noto Sans CJK JP", sans-serif;color:#444444;transform:scaleX(0.8077);'><i></i>ヘルプ</span>
<span class="t" style='left:710.40px;top:53.80px;font:normal 13px "Liberation Sans", "Noto Sans CJK JP", sans-serif;color:#444444;transform:scaleX(0.9846);'><i></i>検索</span>
<span class="t" style='left:1308.50px;top:54.50px;font:normal 13px "Liberation Sans", "Noto Sans CJK JP", sans-serif;color:#b5b3b1;transform:scaleX(0.9808);'><i></i>共有</span>
<span class="t" style='left:10.47px;top:157.80px;font:normal 12px "Liberation Sans", "Noto Sans CJK JP", sans-serif;color:#444444;transform:scaleX(0.7293);'><i></i>クリップボード</span>
<span class="t" style='left:200.28px;top:157.30px;font:normal 12px "Liberation Sans", "Noto Sans CJK JP", sans-serif;color:#444444;transform:scaleX(0.7174);'><i></i>フォント</span>
<span class="t" style='left:485.70px;top:157.30px;font:normal 12px "Liberation Sans", "Noto Sans CJK JP", sans-serif;color:#444444;transform:scaleX(0.9625);'><i></i>配置</span>
<span class="t" style='left:709.80px;top:157.80px;font:normal 12px "Liberation Sans", "Noto Sans CJK JP", sans-serif;color:#444444;transform:scaleX(1.0083);'><i></i>数値</span>
<span class="t" style='left:877.13px;top:157.80px;font:normal 12px "Liberation Sans", "Noto Sans CJK JP", sans-serif;color:#444444;transform:scaleX(0.7681);'><i></i>スタイル</span>
<span class="t" style='left:1049.40px;top:158.30px;font:normal 12px "Liberation Sans", "Noto Sans CJK JP", sans-serif;color:#444444;transform:scaleX(0.7917);'><i></i>セル</span>
<span class="t" style='left:1226.40px;top:157.80px;font:normal 12px "Liberation Sans", "Noto Sans CJK JP", sans-serif;color:#444444;transform:scaleX(0.9833);'><i></i>編集</span>
<span class="t" style='left:10.00px;top:118.00px;font:normal 12px "Liberation Sans", "Noto Sans CJK JP", sans-serif;color:#a9a7a5;transform:scaleX(0.8812);'><i></i>貼り付け</span>
<span class="t" style='left:109.48px;top:93.10px;font:normal 12.5px "Liberation Sans", "Noto Sans CJK JP", sans-serif;color:#a9a7a5;transform:scaleX(0.8217);'><i></i>ＭＳ Ｐゴシック</span>
<span class="t" style='left:267.00px;top:92.10px;font:normal 12.5px "Liberation Sans", "Noto Sans CJK JP", sans-serif;color:#a9a7a5;transform:scaleX(0.9214);'><i></i>11</span>
<span class="t" style='left:308.80px;top:91.50px;font:normal 15px "Liberation Sans", "Noto Sans CJK JP", sans-serif;color:#a9a7a5;transform:scaleX(0.9700);'><i></i>A</span>
<span class="t" style='left:331.20px;top:91.80px;font:normal 13px "Liberation Sans", "Noto Sans CJK JP", sans-serif;color:#a9a7a5;transform:scaleX(0.9222);'><i></i>A</span>
<span class="t" style='left:113.30px;top:123.50px;font:bold 14.5px "Liberation Sans", "Noto Sans CJK JP", sans-serif;color:#a9a7a5;transform:scaleX(0.8000);'><i></i>B</span>
<span class="t" style='left:136.93px;top:123.50px;font:italic normal 14.5px "Liberation Serif", serif;color:#a9a7a5;transform:scaleX(0.9286);'><i></i>I</span>
<span class="t" style='left:155.46px;top:122.00px;font:normal 13.5px "Liberation Sans", "Noto Sans CJK JP", sans-serif;color:#a9a7a5;transform:scaleX(1.0375);'><i></i>U</span>
<span class="t" style='left:275.50px;top:121.00px;font:normal 15px "Liberation Sans", "Noto Sans CJK JP", sans-serif;color:#a9a7a5;transform:scaleX(1.1000);'><i></i>A</span>
<span class="t" style='left:321.00px;top:116.00px;font:normal 7px "Liberation Sans", "Noto Sans CJK JP", sans-serif;color:#a9a7a5;transform:scaleX(0.8571);'><i></i>ア</span>
<span class="t" style='left:321.00px;top:124.50px;font:normal 7px "Liberation Sans", "Noto Sans CJK JP", sans-serif;color:#a9a7a5;transform:scaleX(0.8571);'><i></i>亜</span>
<span class="t" style='left:513.60px;top:93.60px;font:normal 12px "Liberation Sans", "Noto Sans CJK JP", sans-serif;color:#a9a7a5;transform:scaleX(0.8755);'><i></i>折り返して全体を表示する</span>
<span class="t" style='left:513.60px;top:124.80px;font:normal 12px "Liberation Sans", "Noto Sans CJK JP", sans-serif;color:#a9a7a5;transform:scaleX(0.8801);'><i></i>セルを結合して中央揃え</span>
<span class="t" style='left:496.50px;top:87.00px;font:normal 10px "Liberation Sans", "Noto Sans CJK JP", sans-serif;color:#a9a7a5;'><i></i>ab</span>
<span class="t" style='left:496.50px;top:93.60px;font:normal 10px "Liberation Sans", "Noto Sans CJK JP", sans-serif;color:#a9a7a5;transform:scaleX(0.8800);'><i></i>c</span>
<span class="t" style='left:668.20px;top:93.10px;font:normal 12.5px "Liberation Sans", "Noto Sans CJK JP", sans-serif;color:#a9a7a5;transform:scaleX(0.9673);'><i></i>標準</span>
<span class="t" style='left:702.50px;top:126.10px;font:normal 19.5px "Liberation Sans", "Noto Sans CJK JP", sans-serif;color:#a9a7a5;transform:scaleX(0.8882);'><i></i>%</span>
<span class="t" style='left:763.60px;top:118.20px;font:normal 9px "Liberation Sans", "Noto Sans CJK JP", sans-serif;color:#a9a7a5;transform:scaleX(0.8533);'><i></i>.0</span>
<span class="t" style='left:757.50px;top:126.20px;font:normal 9px "Liberation Sans", "Noto Sans CJK JP", sans-serif;color:#a9a7a5;'><i></i>.00</span>
<span class="t" style='left:779.50px;top:118.20px;font:normal 9px "Liberation Sans", "Noto Sans CJK JP", sans-serif;color:#a9a7a5;'><i></i>.00</span>
<span class="t" style='left:785.80px;top:126.20px;font:normal 9px "Liberation Sans", "Noto Sans CJK JP", sans-serif;color:#a9a7a5;transform:scaleX(0.8266);'><i></i>.0</span>
<span class="t" style='left:814.20px;top:117.10px;font:normal 12px "Liberation Sans", "Noto Sans CJK JP", sans-serif;color:#a9a7a5;transform:scaleX(0.9383);'><i></i>条件付き</span>
<span class="t" style='left:820.30px;top:131.10px;font:normal 12px "Liberation Sans", "Noto Sans CJK JP", sans-serif;color:#a9a7a5;transform:scaleX(0.9625);'><i></i>書式</span>
<span class="t" style='left:863.64px;top:118.10px;font:normal 12px "Liberation Sans", "Noto Sans CJK JP", sans-serif;color:#a9a7a5;transform:scaleX(0.7622);'><i></i>テーブルとして</span>
<span class="t" style='left:868.50px;top:131.10px;font:normal 12px "Liberation Sans", "Noto Sans CJK JP", sans-serif;color:#a9a7a5;transform:scaleX(0.9771);'><i></i>書式設定</span>
<span class="t" style='left:941.20px;top:117.60px;font:normal 12px "Liberation Sans", "Noto Sans CJK JP", sans-serif;color:#a9a7a5;transform:scaleX(0.8457);'><i></i>セルの</span>
<span class="t" style='left:932.25px;top:131.60px;font:normal 12px "Liberation Sans", "Noto Sans CJK JP", sans-serif;color:#a9a7a5;transform:scaleX(0.7511);'><i></i>スタイル</span>
<span class="t" style='left:1006.40px;top:117.10px;font:normal 12px "Liberation Sans", "Noto Sans CJK JP", sans-serif;color:#a9a7a5;transform:scaleX(0.9500);'><i></i>挿入</span>
<span class="t" style='left:1048.70px;top:117.60px;font:normal 12px "Liberation Sans", "Noto Sans CJK JP", sans-serif;color:#a9a7a5;transform:scaleX(0.9458);'><i></i>削除</span>
<span class="t" style='left:1090.60px;top:117.10px;font:normal 12px "Liberation Sans", "Noto Sans CJK JP", sans-serif;color:#a9a7a5;transform:scaleX(0.9500);'><i></i>書式</span>
<span class="t" style='left:1160.52px;top:85.00px;font:normal 12px "Liberation Sans", "Noto Sans CJK JP", sans-serif;color:#333;transform:scaleX(0.8753);'><i></i>オート SUM</span>
<span class="t" style='left:1160.82px;top:107.20px;font:normal 12px "Liberation Sans", "Noto Sans CJK JP", sans-serif;color:#a9a7a5;transform:scaleX(0.6771);'><i></i>フィル</span>
<span class="t" style='left:1160.51px;top:130.30px;font:normal 12px "Liberation Sans", "Noto Sans CJK JP", sans-serif;color:#333;transform:scaleX(0.6857);'><i></i>クリア</span>
<span class="t" style='left:1253.30px;top:84.00px;font:normal 14.2px "Liberation Sans", "Noto Sans CJK JP", sans-serif;color:#a9a7a5;transform:scaleX(0.9300);'><i></i>A</span>
<span class="t" style='left:1253.60px;top:98.30px;font:normal 15px "Liberation Sans", "Noto Sans CJK JP", sans-serif;color:#a9a7a5;transform:scaleX(0.9778);'><i></i>Z</span>
<span class="t" style='left:1242.50px;top:117.40px;font:normal 12px "Liberation Sans", "Noto Sans CJK JP", sans-serif;color:#a9a7a5;transform:scaleX(0.8508);'><i></i>並べ替えと</span>
<span class="t" style='left:1240.67px;top:131.90px;font:normal 12px "Liberation Sans", "Noto Sans CJK JP", sans-serif;color:#a9a7a5;transform:scaleX(0.7276);'><i></i>フィルター</span>
<span class="t" style='left:1301.50px;top:117.10px;font:normal 12px "Liberation Sans", "Noto Sans CJK JP", sans-serif;color:#a9a7a5;transform:scaleX(0.9857);'><i></i>検索と</span>
<span class="t" style='left:1300.50px;top:131.10px;font:normal 12px "Liberation Sans", "Noto Sans CJK JP", sans-serif;color:#a9a7a5;'><i></i>選択</span>
<span class="t" style='left:11.80px;top:194.80px;font:normal 15px "NanumGothic", "Liberation Sans", sans-serif;color:#5a5a5a;transform:scaleX(1.0048);'><i></i>MMULT</span>
<span class="t" style='left:263.70px;top:192.50px;font:normal 14.5px "NanumGothic", "Liberation Sans", sans-serif;color:#444;transform:scaleX(1.0688);-webkit-text-stroke:0.5px #444;'><i></i>=WZpbsv2("L",3,1,A3:F5,G3:H5)</span>
<span class="t" style='left:60.00px;top:227.40px;font:normal 13px "NanumGothic", "Liberation Sans", sans-serif;color:#222;transform:scaleX(0.9000);'><i></i>A</span>
<span class="t" style='left:130.50px;top:227.40px;font:normal 13px "NanumGothic", "Liberation Sans", sans-serif;color:#222;transform:scaleX(1.5000);'><i></i>B</span>
<span class="t" style='left:204.00px;top:227.40px;font:normal 13px "NanumGothic", "Liberation Sans", sans-serif;color:#222;'><i></i>C</span>
<span class="t" style='left:274.88px;top:227.40px;font:normal 13px "NanumGothic", "Liberation Sans", sans-serif;color:#222;transform:scaleX(1.1250);'><i></i>D</span>
<span class="t" style='left:346.50px;top:227.40px;font:normal 13px "NanumGothic", "Liberation Sans", sans-serif;color:#222;transform:scaleX(1.5000);'><i></i>E</span>
<span class="t" style='left:418.50px;top:227.40px;font:normal 13px "NanumGothic", "Liberation Sans", sans-serif;color:#222;transform:scaleX(1.5000);'><i></i>F</span>
<span class="t" style='left:490.88px;top:227.40px;font:normal 13px "NanumGothic", "Liberation Sans", sans-serif;color:#222;transform:scaleX(1.1250);'><i></i>G</span>
<span class="t" style='left:562.88px;top:227.40px;font:normal 13px "NanumGothic", "Liberation Sans", sans-serif;color:#222;transform:scaleX(1.1250);'><i></i>H</span>
<span class="t" style='left:637.10px;top:226.90px;font:normal 13px "NanumGothic", "Liberation Sans", sans-serif;color:#217346;transform:scaleX(1.7000);'><i></i>I</span>
<span class="t" style='left:708.80px;top:226.90px;font:normal 13px "NanumGothic", "Liberation Sans", sans-serif;color:#217346;transform:scaleX(1.8500);'><i></i>J</span>
<span class="t" style='left:1283.60px;top:227.40px;font:normal 13px "NanumGothic", "Liberation Sans", sans-serif;color:#222;transform:scaleX(1.1000);'><i></i>R</span>
<span class="t" style='left:9.32px;top:245.30px;font:normal 12.5px "NanumGothic", "Liberation Sans", sans-serif;color:#222;transform:scaleX(1.0500);'><i></i>1</span>
<span class="t" style='left:9.32px;top:263.30px;font:normal 12.5px "NanumGothic", "Liberation Sans", sans-serif;color:#222;transform:scaleX(1.0500);'><i></i>2</span>
<span class="t" style='left:9.32px;top:281.30px;font:normal 12.5px "NanumGothic", "Liberation Sans", sans-serif;color:#217346;transform:scaleX(1.0500);'><i></i>3</span>
<span class="t" style='left:9.32px;top:299.30px;font:normal 12.5px "NanumGothic", "Liberation Sans", sans-serif;color:#217346;transform:scaleX(1.0500);'><i></i>4</span>
<span class="t" style='left:9.32px;top:317.30px;font:normal 12.5px "NanumGothic", "Liberation Sans", sans-serif;color:#217346;transform:scaleX(1.0500);'><i></i>5</span>
<span class="t" style='left:9.32px;top:335.30px;font:normal 12.5px "NanumGothic", "Liberation Sans", sans-serif;color:#217346;transform:scaleX(1.0500);'><i></i>6</span>
<span class="t" style='left:9.32px;top:353.30px;font:normal 12.5px "NanumGothic", "Liberation Sans", sans-serif;color:#222;transform:scaleX(1.0500);'><i></i>7</span>
<span class="t" style='left:9.32px;top:371.30px;font:normal 12.5px "NanumGothic", "Liberation Sans", sans-serif;color:#222;transform:scaleX(1.0500);'><i></i>8</span>
<span class="t" style='left:9.32px;top:389.30px;font:normal 12.5px "NanumGothic", "Liberation Sans", sans-serif;color:#222;transform:scaleX(1.0500);'><i></i>9</span>
<span class="t" style='left:5.35px;top:407.30px;font:normal 12.5px "NanumGothic", "Liberation Sans", sans-serif;color:#222;transform:scaleX(1.0500);'><i></i>10</span>
<span class="t" style='left:5.35px;top:425.30px;font:normal 12.5px "NanumGothic", "Liberation Sans", sans-serif;color:#222;transform:scaleX(1.0500);'><i></i>11</span>
<span class="t" style='left:5.35px;top:443.30px;font:normal 12.5px "NanumGothic", "Liberation Sans", sans-serif;color:#222;transform:scaleX(1.0500);'><i></i>12</span>
<span class="t" style='left:5.35px;top:461.30px;font:normal 12.5px "NanumGothic", "Liberation Sans", sans-serif;color:#222;transform:scaleX(1.0500);'><i></i>13</span>
<span class="t" style='left:5.35px;top:479.30px;font:normal 12.5px "NanumGothic", "Liberation Sans", sans-serif;color:#222;transform:scaleX(1.0500);'><i></i>14</span>
<span class="t" style='left:5.35px;top:497.30px;font:normal 12.5px "NanumGothic", "Liberation Sans", sans-serif;color:#222;transform:scaleX(1.0500);'><i></i>15</span>
<span class="t" style='left:5.35px;top:515.30px;font:normal 12.5px "NanumGothic", "Liberation Sans", sans-serif;color:#222;transform:scaleX(1.0500);'><i></i>16</span>
<span class="t" style='left:5.35px;top:533.30px;font:normal 12.5px "NanumGothic", "Liberation Sans", sans-serif;color:#222;transform:scaleX(1.0500);'><i></i>17</span>
<span class="t" style='left:5.35px;top:551.30px;font:normal 12.5px "NanumGothic", "Liberation Sans", sans-serif;color:#222;transform:scaleX(1.0500);'><i></i>18</span>
<span class="t" style='left:5.35px;top:569.30px;font:normal 12.5px "NanumGothic", "Liberation Sans", sans-serif;color:#222;transform:scaleX(1.0500);'><i></i>19</span>
<span class="t" style='left:5.35px;top:587.30px;font:normal 12.5px "NanumGothic", "Liberation Sans", sans-serif;color:#222;transform:scaleX(1.0500);'><i></i>20</span>
<span class="t" style='left:5.35px;top:605.30px;font:normal 12.5px "NanumGothic", "Liberation Sans", sans-serif;color:#222;transform:scaleX(1.0500);'><i></i>21</span>
<span class="t" style='left:5.35px;top:623.30px;font:normal 12.5px "NanumGothic", "Liberation Sans", sans-serif;color:#222;transform:scaleX(1.0500);'><i></i>22</span>
<span class="t" style='left:5.35px;top:641.30px;font:normal 12.5px "NanumGothic", "Liberation Sans", sans-serif;color:#222;transform:scaleX(1.0500);'><i></i>23</span>
<span class="t" style='left:780.63px;top:232.30px;font:normal 12px "Liberation Sans", "Noto Sans CJK JP", sans-serif;color:#1a1a1a;transform:scaleX(0.9695);'><i></i>関数の引数</span>
<span class="t" style='left:1204.30px;top:231.70px;font:normal 12.5px "DejaVu Sans", "Noto Sans CJK JP", sans-serif;color:#000000;transform:scaleX(0.9167);'><i></i>?</span>
<span class="t" style='left:785.90px;top:261.80px;font:normal 12px "DejaVu Sans", "Noto Sans CJK JP", sans-serif;color:#000000;transform:scaleX(0.9448);'><i></i>WZpbsv2</span>
<span class="t" style='left:792.63px;top:290.00px;font:normal 12px "DejaVu Sans", "Noto Sans CJK JP", sans-serif;color:#000000;transform:scaleX(0.9676);'><i></i>Uplo</span>
<span class="t" style='left:831.72px;top:289.60px;font:normal 12px "DejaVu Sans", "Noto Sans CJK JP", sans-serif;color:#000000;transform:scaleX(0.9812);'><i></i>"L"</span>
<span class="t" style='left:1034.81px;top:290.00px;font:normal 12px "DejaVu Sans", "Noto Sans CJK JP", sans-serif;color:#000000;transform:scaleX(0.9875);'><i></i>=</span>
<span class="t" style='left:1053.62px;top:290.00px;font:normal 12px "DejaVu Sans", "Noto Sans CJK JP", sans-serif;color:#000000;transform:scaleX(0.9750);'><i></i>"L"</span>
<span class="t" style='left:808.90px;top:317.00px;font:normal 12px "DejaVu Sans", "Noto Sans CJK JP", sans-serif;color:#000000;transform:scaleX(1.2000);'><i></i>N</span>
<span class="t" style='left:832.70px;top:316.60px;font:normal 12px "DejaVu Sans", "Noto Sans CJK JP", sans-serif;color:#000000;transform:scaleX(0.8143);'><i></i>3</span>
<span class="t" style='left:1034.81px;top:317.00px;font:normal 12px "DejaVu Sans", "Noto Sans CJK JP", sans-serif;color:#000000;transform:scaleX(0.9875);'><i></i>=</span>
<span class="t" style='left:1054.60px;top:317.00px;font:normal 12px "DejaVu Sans", "Noto Sans CJK JP", sans-serif;color:#000000;transform:scaleX(0.9143);'><i></i>3</span>
<span class="t" style='left:803.38px;top:344.00px;font:normal 12px "DejaVu Sans", "Noto Sans CJK JP", sans-serif;color:#000000;transform:scaleX(1.0166);'><i></i>Kd</span>
<span class="t" style='left:831.82px;top:343.60px;font:normal 12px "DejaVu Sans", "Noto Sans CJK JP", sans-serif;color:#000000;transform:scaleX(0.8833);'><i></i>1</span>
<span class="t" style='left:1034.81px;top:344.00px;font:normal 12px "DejaVu Sans", "Noto Sans CJK JP", sans-serif;color:#000000;transform:scaleX(0.9875);'><i></i>=</span>
<span class="t" style='left:1053.70px;top:344.00px;font:normal 12px "DejaVu Sans", "Noto Sans CJK JP", sans-serif;color:#000000;transform:scaleX(0.9000);'><i></i>1</span>
<span class="t" style='left:804.00px;top:371.00px;font:normal 12px "DejaVu Sans", "Noto Sans CJK JP", sans-serif;color:#000000;transform:scaleX(0.9534);'><i></i>Ab</span>
<span class="t" style='left:832.70px;top:370.60px;font:normal 12px "DejaVu Sans", "Noto Sans CJK JP", sans-serif;color:#000000;transform:scaleX(1.0447);'><i></i>A3:F5</span>
<span class="t" style='left:1034.81px;top:371.00px;font:normal 12px "DejaVu Sans", "Noto Sans CJK JP", sans-serif;color:#000000;transform:scaleX(0.9875);'><i></i>=</span>
<span class="t" style='left:1053.63px;top:371.00px;font:normal 12px "DejaVu Sans", "Noto Sans CJK JP", sans-serif;color:#000000;transform:scaleX(0.9703);'><i></i>{2.2,0,2.11,0,2.93,0;-0.32,0....</span>
<span class="t" style='left:810.50px;top:398.00px;font:normal 12px "DejaVu Sans", "Noto Sans CJK JP", sans-serif;color:#000000;'><i></i>B</span>
<span class="t" style='left:832.70px;top:397.60px;font:normal 12px "DejaVu Sans", "Noto Sans CJK JP", sans-serif;color:#000000;transform:scaleX(0.9811);'><i></i>G3:H5</span>
<span class="t" style='left:1034.81px;top:398.00px;font:normal 12px "DejaVu Sans", "Noto Sans CJK JP", sans-serif;color:#000000;transform:scaleX(0.9875);'><i></i>=</span>
<span class="t" style='left:1053.64px;top:398.00px;font:normal 12px "DejaVu Sans", "Noto Sans CJK JP", sans-serif;color:#000000;transform:scaleX(0.9603);'><i></i>{-1.7808,-1.5394;1.9646,1.3...</span>
<span class="t" style='left:1034.81px;top:428.90px;font:normal 12px "DejaVu Sans", "Noto Sans CJK JP", sans-serif;color:#000000;transform:scaleX(0.9875);'><i></i>=</span>
<span class="t" style='left:1053.63px;top:428.90px;font:normal 12px "DejaVu Sans", "Noto Sans CJK JP", sans-serif;color:#000000;transform:scaleX(0.9735);'><i></i>{-0.92,-0.29;0.86,0.64;0.51,...</span>
<span class="t" style='left:779.20px;top:448.00px;font:normal 12px "DejaVu Sans", "Noto Sans CJK JP", sans-serif;color:#000000;transform:scaleX(0.9639);'><i></i>連立一次方程式 AX = B の解 (正定値エルミート帯行列) (実数部／虚数部分離形式)</span>
<span class="t" style='left:950.01px;top:475.70px;font:normal 12px "DejaVu Sans", "Noto Sans CJK JP", sans-serif;color:#000000;transform:scaleX(0.9883);'><i></i>Uplo  : 上三角/下三角指定 (U または L)</span>
<span class="t" style='left:779.20px;top:549.60px;font:normal 12px "DejaVu Sans", "Noto Sans CJK JP", sans-serif;color:#000000;transform:scaleX(0.9901);'><i></i>数式の結果 =  -0.92</span>
<span class="t" style='left:777.42px;top:582.40px;font:normal 12px "DejaVu Sans", "Noto Sans CJK JP", sans-serif;color:#0066cc;transform:scaleX(0.8889);'><i></i>この関数のヘルプ(H)</span>
<span class="t" style='left:1138.00px;top:582.10px;font:normal 12px "DejaVu Sans", "Noto Sans CJK JP", sans-serif;color:#000000;transform:scaleX(0.9488);'><i></i>OK</span>
<span class="t" style='left:1206.20px;top:582.60px;font:normal 12px "DejaVu Sans", "Noto Sans CJK JP", sans-serif;color:#000000;transform:scaleX(0.7966);'><i></i>キャンセル</span>
<span class="t" style='left:222.10px;top:189.80px;font:italic bold 12.5px "Liberation Serif", serif;color:#2f8f5b;transform:scaleX(1.1710);'><i></i>fx</span>
<span class="t" style='left:31.40px;top:246.00px;font:normal 12.5px "NanumGothic", "Liberation Sans", sans-serif;color:#000;transform:scaleX(0.9892);'><i></i>WZpbsv2</span>
<span class="t" style='left:31.40px;top:263.40px;font:normal 12.5px "NanumGothic", "Liberation Sans", sans-serif;color:#000;transform:scaleX(0.9444);'><i></i>A</span>
<span class="t" style='left:462.25px;top:263.40px;font:normal 12.5px "NanumGothic", "Liberation Sans", sans-serif;color:#000;transform:scaleX(1.4500);'><i></i>B</span>
<span class="t" style='left:607.40px;top:263.40px;font:normal 12.5px "NanumGothic", "Liberation Sans", sans-serif;color:#000;transform:scaleX(0.8556);'><i></i>X</span>
<span class="t" style='left:606.37px;top:281.60px;font:normal 12.8px "NanumGothic", "Liberation Sans", sans-serif;color:#000;transform:scaleX(1.0290);'><i></i>F5,G3:H5)</span>
</body>
</html>
